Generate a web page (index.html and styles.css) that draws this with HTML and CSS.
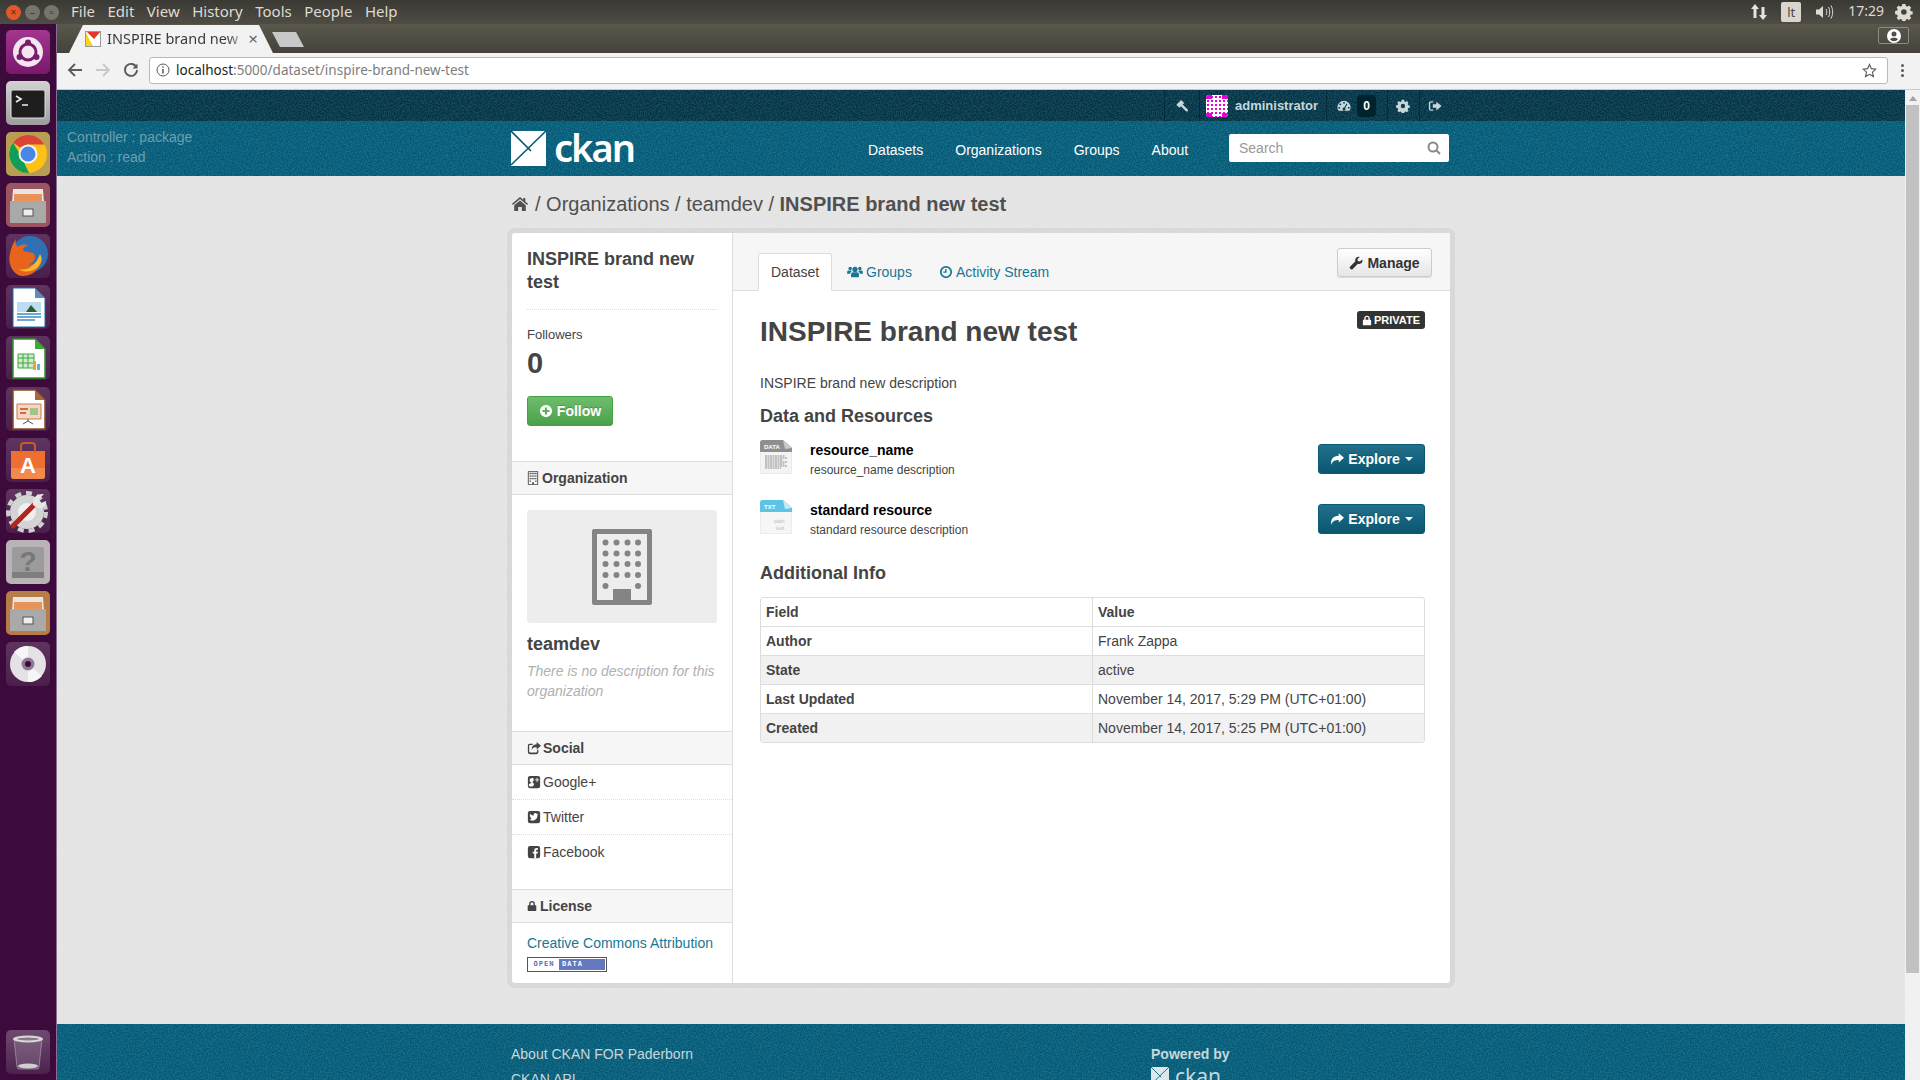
FILE: index.html
```html
<!DOCTYPE html>
<html lang="en">
<head>
  <meta charset="UTF-8" />
  <title>INSPIRE brand new test - Datasets - CKAN</title>
  <link rel="stylesheet" href="styles.css">
</head>
<body>
  <svg class="defs" width="0" height="0">
    <symbol id="i-hammer" viewBox="0 0 16 16"><path d="M1.5 6.5 7 1l3.5 3.5L8.8 6.2l5.7 5.7a1.4 1.4 0 0 1-2 2L6.800 8.200 5 10z"/></symbol>
    <symbol id="i-dash" viewBox="0 0 16 16"><path fill-rule="evenodd" d="M8 2a7.500 7.500 0 0 0-7.500 7.500c0 1.700.5 3 1.300 4h12.400c.8-1 1.300-2.300 1.300-4A7.500 7.500 0 0 0 8 2zM8 3.300a1.100 1.100 0 1 1 0 2.200 1.100 1.100 0 0 1 0-2.200zM3.800 5a1.100 1.100 0 1 1 0 2.200 1.100 1.100 0 0 1 0-2.200zM2.600 9a1.100 1.100 0 1 1 0 2.200 1.100 1.100 0 0 1 0-2.200zM13.400 9a1.100 1.100 0 1 1 0 2.200 1.100 1.100 0 0 1 0-2.200zM11 5l1 .6-2.600 4.700a1.700 1.700 0 1 1-1.200-.6z"/></symbol>
    <symbol id="i-gear" viewBox="0 0 16 16"><path fill-rule="evenodd" d="M6.500 1h3l.4 2 1.300.6 1.800-1.100 2 2.100-1.100 1.700.6 1.400 2 .4v2.800l-2 .4-.6 1.400 1.100 1.700-2 2.100-1.800-1.100-1.300.6-.4 2h-3l-.4-2-1.300-.6-1.800 1.100-2-2.100 1.100-1.700-.6-1.400-2-.4V7.700l2-.4.6-1.400L.9 4.600l2-2.100 1.800 1.100L6 3zM8 6a2.700 2.700 0 1 0 0 5.400A2.700 2.700 0 0 0 8 6z" transform="scale(.92) translate(.6 0)"/></symbol>
    <symbol id="i-signout" viewBox="0 0 16 16"><path d="M6 2.500H3a2 2 0 0 0-2 2v7a2 2 0 0 0 2 2h3v-1.600H3.200a.6.6 0 0 1-.6-.6V4.700a.6.6 0 0 1 .6-.6H6z"/><path d="M9.500 3 15.500 8l-6 5V10H5.500V6H9.500z"/></symbol>
    <symbol id="i-home" viewBox="0 0 18 16"><path d="M9 1 1 7.800l.9 1.100L9 3l7.100 5.900.9-1.100-2.700-2.300V2h-2v1.800z"/><path d="M9 4.400 3.200 9.200V15h4v-4h3.600v4h4V9.200z"/></symbol>
    <symbol id="i-users" viewBox="0 0 18 16"><circle cx="9" cy="5" r="3"/><circle cx="3.500" cy="4" r="2"/><circle cx="14.500" cy="4" r="2"/><path d="M4.500 14V10.500C4.500 9 5.500 8.200 7 8.200h4c1.500 0 2.500.8 2.500 2.300V14z"/><path d="M0 10V8c0-1.200.7-1.800 1.900-1.800h2.400c.3.700.6 1.100 1 1.500C4 8.200 3.400 9 3.300 10zM18 10V8c0-1.200-.7-1.800-1.900-1.800h-2.400c-.3.700-.6 1.100-1 1.500 1.300.5 1.900 1.300 2 2.300z"/></symbol>
    <symbol id="i-clock" viewBox="0 0 16 16"><path fill-rule="evenodd" d="M8 1a7 7 0 1 0 0 14A7 7 0 0 0 8 1zm0 2a5 5 0 1 1 0 10A5 5 0 0 1 8 3z"/><path d="M7 4.500h1.600v4.300H5v-1.500h2z"/></symbol>
    <symbol id="i-wrench" viewBox="0 0 16 16"><path d="M15.200 4.100c.5 1.800-.1 3.400-1.400 4.300-1.100.8-2.400.9-3.600.5L4.300 14.800a1.900 1.900 0 0 1-2.800-.1 1.900 1.900 0 0 1-.1-2.700l5.900-5.900c-.4-1.300-.2-2.600.6-3.700C9 1 10.500.5 12.200 1L9.700 3.500l.4 2.300 2.300.5z"/></symbol>
    <symbol id="i-plus" viewBox="0 0 16 16"><path fill-rule="evenodd" d="M8 1a7 7 0 1 0 0 14A7 7 0 0 0 8 1zM6.800 4h2.400v2.800H12v2.400H9.200V12H6.800V9.200H4V6.800h2.800z"/></symbol>
    <symbol id="i-reply" viewBox="0 0 16 16"><path d="M10 1.500 16 6.700l-6 5.200V9C6 9 3 9.800 1.500 14.500.5 8.500 3.500 4.500 10 4.400z"/></symbol>
    <symbol id="i-lock" viewBox="0 0 14 16"><path fill-rule="evenodd" d="M3 7V4.800C3 2.400 4.700 1 7 1s4 1.400 4 3.800V7h1.100c.5 0 .9.400.9.900v6.200c0 .5-.4.900-.9.900H1.900a.9.900 0 0 1-.9-.9V7.900c0-.5.4-.9.900-.9zm2 0h4V4.800C9 3.600 8.200 3 7 3s-2 .6-2 1.800z"/></symbol>
    <symbol id="i-building" viewBox="0 0 14 16"><path fill-rule="evenodd" d="M1 0h12v16H1zM2 1v14h4v-2h2v2h4V1z"/><path d="M3 2h1.500v1.500H3zM5.200 2h1.500v1.500H5.200zM7.400 2h1.500v1.500H7.400zM9.600 2h1.500v1.500H9.600zM3 5h1.500v1.500H3zM5.200 5h1.500v1.500H5.200zM7.400 5h1.500v1.500H7.400zM9.600 5h1.500v1.500H9.600zM3 8h1.500v1.500H3zM5.200 8h1.500v1.500H5.200zM7.400 8h1.500v1.500H7.400zM9.600 8h1.500v1.500H9.600zM3 11h1.500v1.500H3zM9.600 11h1.500v1.500H9.600z"/></symbol>
    <symbol id="i-share" viewBox="0 0 16 16"><path d="M11 1l5 4.300-5 4.300V7.200c-3 0-4.800.6-5.500 3C5 6.500 7 4 11 3.800z"/><path d="M3 3h3.500v1.500H3.400c-.6 0-.9.300-.9.900v6.700c0 .6.300.9.900.9h7.200c.6 0 .9-.3.900-.9V10H13v2.500c0 1.500-1 2.500-2.500 2.500H3.500C2 15 1 14 1 12.500v-7C1 4 1.800 3 3 3z"/></symbol>
    <symbol id="i-gplus" viewBox="0 0 16 16"><rect x="1" y="1" width="14" height="14" rx="2.500"/><path fill="#fff" d="M11 3h1v2h2v1h-2v2h-1V6H9V5h2z"/><path fill="#fff" d="M3 6c0-1.800 1.300-2.700 3-2.700h2.400l-.8.600h-.8c.6.400.9 1 .9 1.700 0 1.400-1.500 1.800-1.500 2.500 0 .6 1.700 1.100 1.700 2.700 0 1.400-1.300 2.400-3.100 2.400C3 13.200 2 12.400 2 11.300c0-1.300 1.400-2 3.200-2-.2-.3-.3-.5-.3-.8C3.800 8.500 3 7.400 3 6z"/></symbol>
    <symbol id="i-twitter" viewBox="0 0 16 16"><rect x="1" y="1" width="14" height="14" rx="2.500"/><path fill="#fff" d="M12.800 4.800c-.4.200-.8.300-1.200.3.400-.3.800-.7.900-1.100-.4.200-.8.400-1.300.5a2 2 0 0 0-3.500 1.900C6 6.300 4.500 5.500 3.500 4.300c-.5.900-.3 2.100.6 2.700-.3 0-.6-.1-.9-.3 0 1 .7 1.800 1.600 2-.3.100-.6.100-.9 0 .3.800 1 1.400 1.900 1.400-.9.700-2 1-3 .9 3.900 2.400 9.300.3 9.100-5 .4-.3.700-.7.900-1.200z"/></symbol>
    <symbol id="i-facebook" viewBox="0 0 16 16"><rect x="1" y="1" width="14" height="14" rx="2.500"/><path fill="#fff" d="M10.500 15V9.800h1.700l.3-2.100h-2V6.500c0-.6.200-1 1-1h1V3.600c-.3 0-.9-.1-1.500-.1-1.600 0-2.700.9-2.700 2.700v1.500H6.500v2.100h1.800V15z"/></symbol>
    <symbol id="i-logo" viewBox="0 0 35 35"><rect width="35" height="35" fill="#fff"/><path d="M0 0 20 20M35 0 0 34" stroke="currentColor" stroke-width="1.600" fill="none"/></symbol>
  </svg>

  <header class="os-bar">
    <div class="win-buttons">
      <span class="win-btn win-close">×</span>
      <span class="win-btn">–</span>
      <span class="win-btn">▫</span>
    </div>
    <nav class="os-menu">
      <span>File</span><span>Edit</span><span>View</span><span>History</span><span>Tools</span><span>People</span><span>Help</span>
    </nav>
    <div class="os-tray">
      <svg class="tray-arrows" width="18" height="18" viewBox="0 0 18 18" fill="#e6e3dc"><path d="M5 1 9 6H6.500v9h-3V6H1z"/><path d="M13 17l4-5h-2.500V4h-3v8H9z"/></svg>
      <span class="tray-lang">lt</span>
      <svg width="20" height="18" viewBox="0 0 20 18" fill="none" stroke="#dfdbd2"><path d="M2 6.500h3L9 3v12l-4-3.500H2z" fill="#dfdbd2" stroke="none"/><path d="M12 6c1 2 1 4 0 6M14.500 4c1.700 3 1.700 7 0 10M17 2.500c2.200 4 2.200 9 0 13"/></svg>
      <span class="tray-time">17:29</span>
      <svg class="tray-power" width="18" height="20" viewBox="0 0 16 16" fill="#dfdbd2"><use href="#i-gear"/></svg>
    </div>
  </header>

  <div class="desktop">
    <aside class="launcher">
      <div class="tile tile-ubuntu">
        <svg viewBox="0 0 44 44"><circle cx="22" cy="22" r="15" fill="#f3e6f0"/><circle cx="22" cy="22" r="8" fill="none" stroke="#7a1c6e" stroke-width="3"/><circle cx="22" cy="12.500" r="3" fill="#7a1c6e"/><circle cx="13.500" cy="27" r="3" fill="#7a1c6e"/><circle cx="30.500" cy="27" r="3" fill="#7a1c6e"/></svg>
      </div>
      <div class="tile tile-terminal">
        <svg viewBox="0 0 44 44"><rect x="5" y="9" width="34" height="28" rx="2" fill="#1e1e1e" stroke="#ddd"/><path d="M10 15l5 3-5 3M16 24h6" stroke="#eee" stroke-width="1.600" fill="none"/></svg>
      </div>
      <div class="tile tile-chrome">
        <svg viewBox="0 0 44 44"><circle cx="22" cy="22" r="19" fill="#fbc116"/><path d="M22 3a19 19 0 0 1 16.500 9.500L22 12.500l-8 3-7-5A19 19 0 0 1 22 3z" fill="#dc4437"/><path d="M7 10.500 15 24l8 17A19 19 0 0 1 7 10.500z" fill="#0f9d58"/><circle cx="22" cy="22" r="9.500" fill="#f4f4f4"/><circle cx="22" cy="22" r="7.500" fill="#4a86e8"/></svg>
      </div>
      <div class="tile tile-files">
        <svg viewBox="0 0 44 44"><path d="M7 6h30l1 14H6z" fill="#e9e6e2"/><path d="M8 11h28v7H8z" fill="#e8935a"/><path d="M4 18h36v22H4z" fill="#a9a9a9"/><rect x="17" y="26" width="10" height="7" fill="#eee" stroke="#555"/></svg>
      </div>
      <div class="tile">
        <svg viewBox="0 0 44 44"><circle cx="24" cy="20" r="18" fill="#2f6fb3"/><path d="M10 5c-1 4 0 6 2 8 3-3 8-3 10-1-3 0-5 2-5 4 2 3 8 1 11 4 3 4-1 10-6 11 6 0 12-4 14-9 1 9-7 20-19 20C8 42 1 30 4 20c.5-5 3-11 6-15z" fill="#e8641c"/><path d="M34 20c3 5 1 10-3 14-5 4-13 5-18 1 6 2 16-1 21-15z" fill="#fbb62c"/></svg>
      </div>
      <div class="tile">
        <svg viewBox="0 0 44 44"><path d="M7 3h22l10 10v29H7z" fill="#fff" stroke="#1f6fa8"/><path d="M29 3l10 10H29z" fill="#5a8fbc"/><path d="M11 17h24v10H11z" fill="#bcdcf2"/><path d="M20 27l5-7 6 7z" fill="#2e5d2e"/><path d="M11 29h24M11 32h24M11 35h18" stroke="#3b8ec8" stroke-width="1.500"/></svg>
      </div>
      <div class="tile">
        <svg viewBox="0 0 44 44"><path d="M7 3h22l10 10v29H7z" fill="#fff" stroke="#2a9a2a" stroke-width="1.500"/><path d="M29 3l10 10H29z" fill="#3fa63f"/><path d="M12 18h16v14H12z" fill="#cfeccf" stroke="#3fa63f"/><path d="M12 22h16M12 27h16M17 18v14M22 18v14" stroke="#3fa63f"/><path d="M27 25h3v9h-3z" fill="#e8a33d"/><path d="M31 28h3v6h-3z" fill="#6fa8dc"/></svg>
      </div>
      <div class="tile">
        <svg viewBox="0 0 44 44"><path d="M7 3h22l10 10v29H7z" fill="#fff" stroke="#8a4a25" stroke-width="1.500"/><path d="M29 3l10 10H29z" fill="#a9653c"/><path d="M11 17h24v15H11z" fill="#f6d5c2" stroke="#c37a50"/><path d="M14 21h8v2h-8zM14 25h6v2h-6z" fill="#c96f3d"/><path d="M24 21h8v7h-8z" fill="#9fc58a"/><path d="M22 32v2l-5 3M22 34l5 3" stroke="#555" fill="none"/></svg>
      </div>
      <div class="tile">
        <svg viewBox="0 0 44 44"><path d="M5 13h34v25a3 3 0 0 1-3 3H8a3 3 0 0 1-3-3z" fill="#ee6f30"/><path d="M5 30h34v8a3 3 0 0 1-3 3H8a3 3 0 0 1-3-3z" fill="#f28a50"/><path d="M15 14V8a3 3 0 0 1 3-3h8a3 3 0 0 1 3 3v6" fill="none" stroke="#c85a26" stroke-width="2"/><text class="tile-a" x="22" y="35" text-anchor="middle">A</text></svg>
      </div>
      <div class="tile">
        <svg viewBox="0 0 44 44"><circle cx="21" cy="23" r="19" fill="none" stroke="#cfcfcf" stroke-width="4" stroke-dasharray="6 5"/><circle cx="21" cy="23" r="17" fill="#d4d4d4"/><circle cx="21" cy="23" r="9" fill="#f0f0f0"/><path d="M7 37 30 14" stroke="#b3261e" stroke-width="5" stroke-linecap="round"/><path d="M27 16c-1-6 3-12 11-11l-5 5 2 4 5-2c1 6-5 11-13 4z" fill="#e6e6e6"/></svg>
      </div>
      <div class="tile tile-help">
        <svg viewBox="0 0 44 44"><rect x="6" y="7" width="32" height="31" rx="2" fill="#9b9b9b"/><rect x="6" y="32" width="32" height="6" fill="#7e7e7e"/><text class="tile-q" x="22" y="31" text-anchor="middle">?</text></svg>
      </div>
      <div class="tile tile-files2">
        <svg viewBox="0 0 44 44"><path d="M7 6h30l1 14H6z" fill="#e9e6e2"/><path d="M8 11h28v7H8z" fill="#e8935a"/><path d="M4 18h36v22H4z" fill="#a9a9a9"/><rect x="17" y="26" width="10" height="7" fill="#eee" stroke="#555"/></svg>
      </div>
      <div class="tile">
        <svg viewBox="0 0 44 44"><circle cx="22" cy="22" r="18" fill="#e4e2e4"/><path d="M22 22 8 10a18 18 0 0 1 14-6zM22 22l14 12a18 18 0 0 1-14 6z" fill="#f6f6f6"/><circle cx="22" cy="22" r="6.500" fill="#8d7a94"/><circle cx="22" cy="22" r="3" fill="#3d0a3c"/></svg>
      </div>
      <div class="tile tile-trash">
        <svg viewBox="0 0 44 44"><path d="M8 9h28l-3 28a2 2 0 0 1-2 2H13a2 2 0 0 1-2-2z" fill="#fff" fill-opacity=".14" stroke="#cbb9c8" stroke-opacity=".5"/><ellipse cx="22" cy="9" rx="15" ry="3.500" fill="#d8d8d8"/><ellipse cx="22" cy="9" rx="11" ry="1.500" fill="#8a7a88"/><ellipse cx="22" cy="36" rx="10" ry="2.500" fill="#cfcfcf"/></svg>
      </div>
    </aside>

    <div class="browser">
      <div class="tabstrip">
        <div class="tab">
          <svg class="favicon" width="16" height="16" viewBox="0 0 16 16"><rect width="16" height="16" fill="#fff"/><path d="M1 0h15L9 8z" fill="#e8352a"/><path d="M0 0l8 15-8 1z" fill="#f7d51d"/><rect x=".5" y=".5" width="15" height="15" fill="none" stroke="#999"/></svg>
          <span class="tab-title">INSPIRE brand new</span>
          <span class="tab-close">×</span>
        </div>
        <div class="newtab"></div>
        <div class="profile-btn">
          <svg width="14" height="14" viewBox="0 0 14 14" fill="#fff"><path fill-rule="evenodd" d="M7 0a7 7 0 1 0 0 14A7 7 0 0 0 7 0zm0 2.500a2.500 2.500 0 1 1 0 5 2.500 2.500 0 0 1 0-5zM3 10.500C4 9 5.500 8.800 7 8.800s3 .2 4 1.700a5.500 5.500 0 0 1-8 0z"/></svg>
        </div>
      </div>
      <div class="toolbar">
        <svg width="16" height="16" viewBox="0 0 16 16" fill="none" stroke="#5a5a5a" stroke-width="1.800"><path d="M15 8H2M8 2 2 8l6 6"/></svg>
        <svg width="16" height="16" viewBox="0 0 16 16" fill="none" stroke="#c8c8c8" stroke-width="1.800"><path d="M1 8h13M8 2l6 6-6 6"/></svg>
        <svg width="16" height="16" viewBox="0 0 16 16" fill="none" stroke="#5a5a5a" stroke-width="1.800"><path d="M13.500 5.500A6 6 0 1 0 14 8"/><path d="M14.500 1.500v5h-5z" fill="#5a5a5a" stroke="none"/></svg>
        <div class="omnibox">
          <svg width="14" height="14" viewBox="0 0 14 14" fill="none" stroke="#5a5a5a"><circle cx="7" cy="7" r="6"/><path d="M7 6v4.500M7 3.500v1.200" stroke-width="1.500"/></svg>
          <span class="url"><b>localhost</b>:5000/dataset/inspire-brand-new-test</span>
          <svg class="star" width="15" height="15" viewBox="0 0 16 16" fill="none" stroke="#5a5a5a" stroke-width="1.200"><path d="M8 1.500l2 4.500 4.800.5-3.600 3.200 1 4.800L8 12.100l-4.200 2.400 1-4.800L1.200 6.500 6 6z"/></svg>
        </div>
        <div class="kebab"><i></i><i></i><i></i></div>
      </div>

      <div class="viewport">
        <div class="page">
          <div class="account-bar">
            <div class="container account-inner">
              <a class="acct-item acct-icon"><svg class="ic14"><use href="#i-hammer"/></svg></a>
              <a class="acct-item acct-user">
                <svg class="avatar" width="22" height="22" viewBox="0 0 22 22"><defs><pattern id="idn" width="4" height="4" patternUnits="userSpaceOnUse"><rect width="4" height="4" fill="#fff"/><rect x="1" y="1" width="2" height="2" fill="#e800d8"/></pattern></defs><rect width="22" height="22" rx="3" fill="url(#idn)"/><path d="M0 3a3 3 0 0 1 3-3h3v4H0zM16 0h3a3 3 0 0 1 3 3v1h-6zM0 18h6v4H3a3 3 0 0 1-3-3zM16 18h6v1a3 3 0 0 1-3 3h-3z" fill="#e800d8"/></svg>
                <span>administrator</span>
              </a>
              <a class="acct-item acct-dash"><svg class="ic14"><use href="#i-dash"/></svg><span class="acct-badge">0</span></a>
              <a class="acct-item acct-icon acct-s"><svg class="ic14"><use href="#i-gear"/></svg></a>
              <a class="acct-item acct-icon acct-s"><svg class="ic14"><use href="#i-signout"/></svg></a>
            </div>
          </div>

          <div class="masthead">
            <div class="debug">Controller : package<br>Action : read</div>
            <div class="masthead-inner">
              <a class="logo"><svg class="logo-mark" width="35" height="35"><use href="#i-logo"/></svg><span class="logo-text">ckan</span></a>
              <nav class="main-nav">
                <a>Datasets</a><a>Organizations</a><a>Groups</a><a>About</a>
              </nav>
              <div class="site-search">
                <span>Search</span>
                <svg width="14" height="14" viewBox="0 0 14 14" fill="none" stroke="#8a8a8a" stroke-width="2"><circle cx="6" cy="6" r="4.500"/><path d="M9.500 9.500 13 13"/></svg>
              </div>
            </div>
          </div>

          <div class="container">
            <div class="breadcrumb">
              <svg class="crumb-home" width="18" height="16"><use href="#i-home"/></svg>
              <span>/ Organizations / teamdev / <b>INSPIRE brand new test</b></span>
            </div>

            <div class="wrapper">
              <aside class="sidebar">
                <div class="info">
                  <h2 class="info-title">INSPIRE brand new test</h2>
                  <div class="followers-label">Followers</div>
                  <div class="followers-count">0</div>
                  <a class="btn btn-follow"><svg class="ic14"><use href="#i-plus"/></svg>Follow</a>
                </div>

                <h3 class="band"><svg class="ic14 ic-b"><use href="#i-building"/></svg>Organization</h3>
                <div class="org">
                  <div class="org-image">
                    <svg width="60" height="76" viewBox="0 0 60 76" fill="#848484">
                      <path fill-rule="evenodd" d="M2 0h56a2 2 0 0 1 2 2v72a2 2 0 0 1-2 2H2a2 2 0 0 1-2-2V2a2 2 0 0 1 2-2zM5 5v66h16V60h18v11h16V5z"/>
                      <circle cx="13.500" cy="13.500" r="3"/><circle cx="24.500" cy="13.500" r="3"/><circle cx="35.500" cy="13.500" r="3"/><circle cx="46" cy="13.500" r="3"/>
                      <circle cx="13.500" cy="24.500" r="3"/><circle cx="24.500" cy="24.500" r="3"/><circle cx="35.500" cy="24.500" r="3"/><circle cx="46" cy="24.500" r="3"/>
                      <circle cx="13.500" cy="35" r="3"/><circle cx="24.500" cy="35" r="3"/><circle cx="35.500" cy="35" r="3"/><circle cx="46" cy="35" r="3"/>
                      <circle cx="13.500" cy="46" r="3"/><circle cx="24.500" cy="46" r="3"/><circle cx="35.500" cy="46" r="3"/><circle cx="46" cy="46" r="3"/>
                      <circle cx="13.500" cy="57" r="3"/><circle cx="46" cy="57" r="3"/>
                      <rect x="22" y="60" width="16" height="12" rx="1"/>
                    </svg>
                  </div>
                  <h2 class="org-name">teamdev</h2>
                  <p class="org-desc">There is no description for this organization</p>
                </div>

                <h3 class="band"><svg class="ic14 ic-s"><use href="#i-share"/></svg>Social</h3>
                <ul class="social">
                  <li><svg class="ic14"><use href="#i-gplus"/></svg>Google+</li>
                  <li><svg class="ic14"><use href="#i-twitter"/></svg>Twitter</li>
                  <li><svg class="ic14"><use href="#i-facebook"/></svg>Facebook</li>
                </ul>

                <h3 class="band"><svg class="ic14 ic-l"><use href="#i-lock"/></svg>License</h3>
                <div class="license">
                  <a>Creative Commons Attribution</a>
                  <div class="od-badge"><span class="od-open">OPEN</span><span class="od-data">DATA</span></div>
                </div>
              </aside>

              <main class="primary">
                <div class="page-header">
                  <ul class="tabs">
                    <li class="tab-on">Dataset</li>
                    <li><svg class="ic16"><use href="#i-users"/></svg>Groups</li>
                    <li><svg class="ic14"><use href="#i-clock"/></svg>Activity Stream</li>
                  </ul>
                  <a class="btn btn-manage"><svg class="ic14"><use href="#i-wrench"/></svg>Manage</a>
                </div>

                <div class="module">
                  <div class="title-row">
                    <h1>INSPIRE brand new test</h1>
                    <span class="private"><svg class="ic11"><use href="#i-lock"/></svg>PRIVATE</span>
                  </div>
                  <p class="notes">INSPIRE brand new description</p>

                  <h3 class="section">Data and Resources</h3>
                  <ul class="resources">
                    <li>
                      <svg class="res-icon" width="32" height="34" viewBox="0 0 32 34"><path d="M3 0h20l9 8v24a2 2 0 0 1-2 2H2a2 2 0 0 1-2-2V3a3 3 0 0 1 3-3z" fill="#f4f4f4" stroke="#e4e4e4"/><path d="M3 0h20l9 8v4H0V3a3 3 0 0 1 3-3z" fill="#8f8f8f"/><path d="M23 0l9 8-7 1z" fill="#c9c9c9"/><text class="res-tag" x="4" y="9">DATA</text><path d="M5 16h20M5 18h22M5 20h18M5 22h22M5 24h20M5 26h22M5 28h16" stroke="#777" stroke-width=".8" stroke-dasharray="2 .5"/></svg>
                      <div class="res-text"><a>resource_name</a><p>resource_name description</p></div>
                      <a class="btn btn-explore"><svg class="ic14"><use href="#i-reply"/></svg>Explore<i class="caret"></i></a>
                    </li>
                    <li>
                      <svg class="res-icon" width="32" height="34" viewBox="0 0 32 34"><path d="M3 0h20l9 8v24a2 2 0 0 1-2 2H2a2 2 0 0 1-2-2V3a3 3 0 0 1 3-3z" fill="#f6f6f6" stroke="#e4e4e4"/><path d="M3 0h20l9 8v4H0V3a3 3 0 0 1 3-3z" fill="#5ec4e6"/><path d="M23 0l9 8-7 1z" fill="#c5e8f4"/><text class="res-tag" x="4" y="9">TXT</text><text class="res-plain" x="14" y="23">plain</text><text class="res-plain" x="16" y="30">text</text></svg>
                      <div class="res-text"><a>standard resource</a><p>standard resource description</p></div>
                      <a class="btn btn-explore"><svg class="ic14"><use href="#i-reply"/></svg>Explore<i class="caret"></i></a>
                    </li>
                  </ul>

                  <h3 class="section section-info">Additional Info</h3>
                  <table class="info-table">
                    <tr><th>Field</th><th>Value</th></tr>
                    <tr><th>Author</th><td>Frank Zappa</td></tr>
                    <tr class="alt"><th>State</th><td>active</td></tr>
                    <tr><th>Last Updated</th><td>November 14, 2017, 5:29 PM (UTC+01:00)</td></tr>
                    <tr class="alt"><th>Created</th><td>November 14, 2017, 5:25 PM (UTC+01:00)</td></tr>
                  </table>
                </div>
              </main>
            </div>
          </div>

          <footer class="site-footer">
            <div class="container footer-inner">
              <ul class="footer-links">
                <li>About CKAN FOR Paderborn</li>
                <li>CKAN API</li>
              </ul>
              <div class="powered">
                <strong>Powered by</strong>
                <div class="powered-logo"><svg class="powered-mark" width="18" height="18"><use href="#i-logo"/></svg><span>ckan</span></div>
              </div>
            </div>
          </footer>
        </div>

        <div class="scrollbar">
          <span class="scroll-up"></span>
          <div class="scroll-thumb"></div>
        </div>
      </div>
    </div>
  </div>
</body>
</html>
```

FILE: styles.css
```css
:root {
  --teal: #005a77;
  --teal-dark: #003345;
  --texto: #444;
  --linha: #ddd;
  --ubuntu: "Noto Sans", "Open Sans", sans-serif;
  --ruido: url("data:image/svg+xml,%3Csvg xmlns='http://www.w3.org/2000/svg' width='256' height='256'%3E%3Cfilter id='n'%3E%3CfeTurbulence type='fractalNoise' baseFrequency='.7' numOctaves='2'/%3E%3CfeColorMatrix values='0 0 0 0 1 0 0 0 0 1 0 0 0 0 1 .3 0 0 0 -.1'/%3E%3C/filter%3E%3Crect width='256' height='256' filter='url(%23n)'/%3E%3C/svg%3E");
}

* {
  margin: 0;
  padding: 0;
  box-sizing: border-box;
}

html, body {
  height: 100%;
  overflow: hidden;
}

body {
  font-family: "Liberation Sans", Arial, sans-serif;
  font-size: 14px;
  line-height: 20px;
  color: var(--texto);
  background: #3d0a3c;
  display: flex;
  flex-direction: column;
}

ul {
  list-style: none;
}

.defs {
  position: absolute;
}

svg {
  flex: none;
}

svg:not([fill]) {
  fill: currentColor;
}

.ic14 { width: 14px; height: 14px; }
.ic16 { width: 16px; height: 14px; }
.ic11 { width: 10px; height: 11px; }

/* barra do sistema */
.os-bar {
  height: 24px;
  flex: none;
  display: flex;
  align-items: center;
  background: linear-gradient(#3a3934, #4f4c44);
  color: #dfdbd2;
  font-family: var(--ubuntu);
  font-size: 15px;
}

.win-buttons {
  display: flex;
  gap: 4px;
  padding-left: 6px;
  width: 71px;
}

.win-btn {
  width: 15px;
  height: 15px;
  border-radius: 50%;
  background: #77746c;
  color: #3c3b37;
  font-size: 11px;
  line-height: 14px;
  text-align: center;
}

.win-close {
  background: #e2582c;
  color: #6b2410;
}

.os-menu {
  display: flex;
  gap: 12.500px;
  margin-top: -2px;
}

.os-tray {
  margin-left: auto;
  display: flex;
  align-items: center;
  gap: 13px;
  padding-right: 7px;
}

.tray-lang {
  width: 20px;
  height: 20px;
  background: #d9d6cf;
  color: #4a4841;
  border-radius: 2px;
  text-align: center;
  line-height: 20px;
  font-size: 13px;
}

.tray-time {
  font-size: 14px;
  margin: -2px 1px 0;
}

.tray-power {
  margin-left: -3px;
}

.desktop {
  flex: 1;
  display: flex;
  min-height: 0;
}

/* launcher */
.launcher {
  width: 57px;
  flex: none;
  display: flex;
  flex-direction: column;
  gap: 7px;
  padding: 6px 0 6px 6px;
  background: #3d0a3c;
  border-right: 1px solid #8b6f92;
}

.tile {
  width: 44px;
  height: 44px;
  border-radius: 5px;
  background: linear-gradient(#5f3560, #4a1f4b);
  flex: none;
}

.tile svg {
  display: block;
  width: 44px;
  height: 44px;
}

.tile-ubuntu { background: linear-gradient(#a3368f, #79186c); }
.tile-terminal { background: linear-gradient(#d2d2d2, #9d9d9d); }
.tile-chrome { background: #b89d55; }
.tile-files { background: #9b5560; }
.tile-help { background: #b9b3b8; }
.tile-files2 { background: #b87c48; }

.tile-trash {
  margin-top: auto;
  background: linear-gradient(#6e4a70, #4b234d);
}

.tile-a {
  font: bold 22px "Liberation Sans", sans-serif;
  fill: #fff;
}

.tile-q {
  font: bold 28px "Liberation Sans", sans-serif;
  fill: #777;
}

/* navegador */
.browser {
  flex: 1;
  min-width: 0;
  display: flex;
  flex-direction: column;
}

.tabstrip {
  height: 29px;
  flex: none;
  display: flex;
  align-items: flex-end;
  background: linear-gradient(#5a574c, #45423b);
  position: relative;
  padding-left: 12px;
}

.tab {
  width: 204px;
  height: 28px;
  display: flex;
  align-items: center;
  padding: 0 15px 0 16px;
  background: #f2f2f2;
  clip-path: polygon(0 100%, 14px 0, 190px 0, 204px 100%);
  font-family: var(--ubuntu);
  font-size: 14.500px;
  color: #3a3a3a;
}

.favicon {
  margin-right: 6px;
}

.tab-title {
  flex: 1;
  margin-top: -2px;
  white-space: nowrap;
  -webkit-mask-image: linear-gradient(90deg, #000 85%, transparent);
  mask-image: linear-gradient(90deg, #000 85%, transparent);
}

.tab-close {
  font-size: 17px;
  color: #666;
}

.newtab {
  width: 32px;
  height: 15px;
  margin: 0 0 6px -1px;
  background: #c8c8c8;
  clip-path: polygon(0 0, 24px 0, 32px 100%, 8px 100%);
}

.profile-btn {
  position: absolute;
  right: 11px;
  top: 3px;
  width: 31px;
  height: 17px;
  display: flex;
  align-items: center;
  justify-content: center;
  border: 1px solid #8e8b82;
  border-radius: 2px;
}

.toolbar {
  height: 37px;
  flex: none;
  display: flex;
  align-items: center;
  background: #f2f2f2;
  border-bottom: 1px solid #c9c9c9;
  padding: 0 16px 2px 10px;
  gap: 12px;
}

.omnibox {
  flex: 1;
  height: 27px;
  margin-left: -2px;
  display: flex;
  align-items: center;
  gap: 6px;
  padding: 0 10px 0 6px;
  background: #fff;
  border: 1px solid #b9b9b9;
  border-radius: 3px;
  font-family: var(--ubuntu);
  font-size: 13.500px;
}

.url {
  color: #7d7d7d;
}

.url b {
  font-weight: 400;
  color: #222;
}

.star {
  margin-left: auto;
}

.kebab {
  display: flex;
  flex-direction: column;
  gap: 2px;
  margin-left: 1px;
}

.kebab i {
  width: 3px;
  height: 3px;
  border-radius: 50%;
  background: #5a5a5a;
}

/* pagina */
.viewport {
  flex: 1;
  min-height: 0;
  display: flex;
  background: #e3e3e3 var(--ruido);
}

.page {
  flex: 1;
  min-width: 0;
  overflow: hidden;
}

.scrollbar {
  width: 15px;
  flex: none;
  background: #f1f1f1;
  padding: 0 1px;
  position: relative;
}

.scroll-up {
  display: block;
  margin: 6px auto 0;
  width: 0;
  border: 4px solid transparent;
  border-top: 0;
  border-bottom: 5px solid #a3a3a3;
}

.scroll-thumb {
  height: 868px;
  margin-top: 4px;
  background: #c1c1c1;
}

.container {
  width: 940px;
  margin: 0 auto;
}

.account-bar {
  height: 31px;
  background: var(--teal-dark) var(--ruido);
  color: #c6d7db;
}

.account-inner {
  height: 100%;
  display: flex;
  justify-content: flex-end;
}

.acct-item {
  display: flex;
  align-items: center;
  border-left: 1px solid #002b38;
}

.acct-icon {
  padding: 0 10px;
}

.acct-s {
  width: 32px;
  padding: 0 0 0 8px;
}

.acct-user {
  width: 127px;
  padding-left: 6px;
  gap: 7px;
  font-size: 13px;
  font-weight: bold;
}

.acct-dash {
  width: 61px;
  padding-left: 10px;
  gap: 6px;
}

.acct-badge {
  width: 19px;
  height: 22px;
  line-height: 22px;
  text-align: center;
  background: #00232e;
  color: #fff;
  border-radius: 4px;
  font-size: 12px;
  font-weight: bold;
}

.masthead {
  height: 55px;
  background: var(--teal) var(--ruido);
  display: grid;
  grid-template-columns: 1fr 940px 1fr;
  color: #fff;
}

.debug {
  padding: 6px 0 0 10px;
  color: #6d9fae;
  white-space: nowrap;
}

.masthead-inner {
  display: flex;
  align-items: center;
}

.logo {
  width: 357px;
  display: flex;
  align-items: center;
  gap: 8px;
  color: var(--teal);
}

.logo-text {
  font-family: "Noto Sans", sans-serif;
  font-size: 38px;
  font-weight: 600;
  line-height: 35px;
  letter-spacing: -2px;
  color: #fff;
  margin-top: -2px;
}

.main-nav {
  display: flex;
  gap: 32px;
  margin-top: 2px;
}

.site-search {
  width: 220px;
  height: 28px;
  margin-left: auto;
  margin-right: 2px;
  margin-top: -1px;
  background: #fff;
  border-radius: 2px;
  display: flex;
  align-items: center;
  justify-content: space-between;
  padding: 0 8px 0 10px;
  color: #999;
}

.breadcrumb {
  height: 57px;
  padding-bottom: 2px;
  display: flex;
  align-items: center;
  gap: 6px;
  font-size: 20px;
  color: #505050;
}

.wrapper {
  margin: 0 1px 41px;
  display: flex;
  background: #fff;
  border-radius: 3px;
  box-shadow: 0 0 0 5px rgba(0, 0, 0, 0.05);
}

/* coluna lateral */
.sidebar {
  width: 221px;
  flex: none;
  border-right: 1px solid var(--linha);
}

.info {
  padding: 15px 15px 35px;
}

.info-title {
  font-size: 18px;
  line-height: 23px;
  padding-bottom: 15px;
  border-bottom: 1px dotted var(--linha);
}

.followers-label {
  margin-top: 15px;
  font-size: 13px;
}

.followers-count {
  font-size: 29px;
  line-height: 36px;
  font-weight: bold;
}

.btn {
  display: inline-flex;
  align-items: center;
  justify-content: center;
  gap: 4px;
  height: 30px;
  border-radius: 3px;
  font-weight: bold;
  white-space: nowrap;
}

.btn-follow {
  margin-top: 15px;
  width: 86px;
  color: #fff;
  background: linear-gradient(#6ebd6e, #4aa14a);
  border: 1px solid #44a044;
  text-shadow: 0 -1px 0 rgba(0, 0, 0, 0.2);
}

.band {
  height: 34px;
  display: flex;
  align-items: center;
  gap: 3px;
  padding-left: 15px;
  font-size: 14px;
  background: #f6f6f6;
  border-top: 1px solid var(--linha);
  border-bottom: 1px solid var(--linha);
}

.ic-b { width: 12px; }
.ic-s { margin-right: -1px; }
.ic-l { width: 10px; }

.org {
  padding: 15px 15px 30px;
}

.org-image {
  height: 113px;
  background: #ededed;
  border-radius: 3px;
  display: flex;
  align-items: center;
  justify-content: center;
}

.org-name {
  margin-top: 10px;
  font-size: 18px;
  line-height: 23px;
}

.org-desc {
  margin-top: 5px;
  font-style: italic;
  color: #b0b0b0;
}

.social {
  padding-bottom: 20px;
}

.social li {
  height: 35px;
  display: flex;
  align-items: center;
  gap: 2px;
  padding-left: 15px;
  border-bottom: 1px dotted var(--linha);
}

.social li:last-child {
  height: 34px;
  border-bottom: 0;
}

.license {
  padding: 10px 15px 11px;
}

.license a {
  color: #187794;
}

.od-badge {
  margin-top: 4px;
  width: 80px;
  height: 15px;
  display: flex;
  border: 1px solid #555;
  padding: 1px;
  font: bold 7px/11px "DejaVu Sans Mono", monospace;
  letter-spacing: 1px;
}

.od-open {
  width: 30px;
  text-align: center;
  color: #5a72b8;
}

.od-data {
  flex: 1;
  padding-left: 3px;
  color: #fff;
  background: #6478bd;
}

/* coluna principal */
.primary {
  flex: 1;
  min-width: 0;
}

.page-header {
  height: 58px;
  display: flex;
  justify-content: space-between;
  padding: 0 18px 0 25px;
  background: #f6f6f6;
  border-bottom: 1px solid var(--linha);
}

.tabs {
  display: flex;
  padding-top: 20px;
}

.tabs li {
  height: 38px;
  display: flex;
  align-items: center;
  gap: 3px;
  padding: 0 12px 0 13px;
  border: 1px solid transparent;
  color: #187794;
}

.tabs .tab-on {
  width: 74px;
  color: #444;
  background: #fff;
  border-color: var(--linha);
  border-bottom-color: #fff;
  border-radius: 3px 3px 0 0;
  margin-right: 1px;
  padding: 0 12px;
}

.btn-manage {
  width: 95px;
  height: 29px;
  margin-top: 15px;
  color: #333;
  background: linear-gradient(#fff, #e6e6e6);
  border: 1px solid #ccc;
  box-shadow: 0 1px 1px rgba(0, 0, 0, 0.1);
}

.module {
  padding: 20px 25px 40px 27px;
}

.title-row {
  display: flex;
  justify-content: space-between;
  align-items: flex-start;
}

.title-row h1 {
  margin-top: 3px;
  font-size: 28px;
  line-height: 36px;
}

.private {
  height: 18px;
  width: 68px;
  display: flex;
  align-items: center;
  justify-content: center;
  gap: 2px;
  background: #333;
  color: #fff;
  border-radius: 3px;
  font-size: 11px;
  font-weight: bold;
}

.notes {
  margin-top: 23px;
}

.section {
  margin-top: 11px;
  font-size: 18px;
  line-height: 24px;
}

.section-info {
  margin-top: 21px;
}

.resources {
  margin-top: 12px;
  display: flex;
  flex-direction: column;
  gap: 20px;
}

.resources li {
  height: 40px;
  display: flex;
  align-items: flex-start;
}

.res-tag {
  font: bold 6px "Liberation Sans", sans-serif;
  fill: #fff;
}

.res-plain {
  font: 5px "Liberation Sans", sans-serif;
  fill: #bbb;
}

.res-text {
  flex: 1;
  padding-left: 18px;
}

.res-text a {
  font-weight: bold;
  color: #000;
}

.res-text p {
  font-size: 12px;
}

.btn-explore {
  width: 107px;
  margin-top: 4px;
  color: #fff;
  background: linear-gradient(#22708b, #085670);
  border: 1px solid #0a5a74;
  text-shadow: 0 -1px 0 rgba(0, 0, 0, 0.2);
}

.caret {
  width: 0;
  margin-left: 1px;
  border: 4px solid transparent;
  border-bottom: 0;
  border-top: 4px solid #fff;
}

.info-table {
  margin-top: 12px;
  width: 100%;
  border-collapse: separate;
  border-spacing: 0;
  border: 1px solid var(--linha);
  border-radius: 3px;
  overflow: hidden;
}

.info-table th,
.info-table td {
  height: 29px;
  line-height: 18px;
  padding: 0 5px;
  text-align: left;
  border-top: 1px solid var(--linha);
}

.info-table tr:first-child th {
  height: 28px;
  border-top: 0;
}

.info-table th:first-child {
  width: 332px;
  border-right: 1px solid var(--linha);
}

.info-table .alt th,
.info-table .alt td {
  background: #f1f1f1;
}

/* rodape */
.site-footer {
  background: var(--teal) var(--ruido);
  color: #c6d7db;
  height: 120px;
}

.footer-inner {
  display: flex;
  padding-top: 20px;
}

.footer-links {
  width: 640px;
  display: flex;
  flex-direction: column;
  gap: 5px;
}

.powered strong {
  display: block;
}

.powered-logo {
  display: flex;
  align-items: center;
  gap: 6px;
  margin-top: 3px;
  color: var(--teal);
}

.powered-logo span {
  font-family: "Noto Sans", sans-serif;
  font-size: 21px;
  line-height: 18px;
  color: #c6d7db;
}

.powered-mark {
  opacity: 0.85;
}
```
